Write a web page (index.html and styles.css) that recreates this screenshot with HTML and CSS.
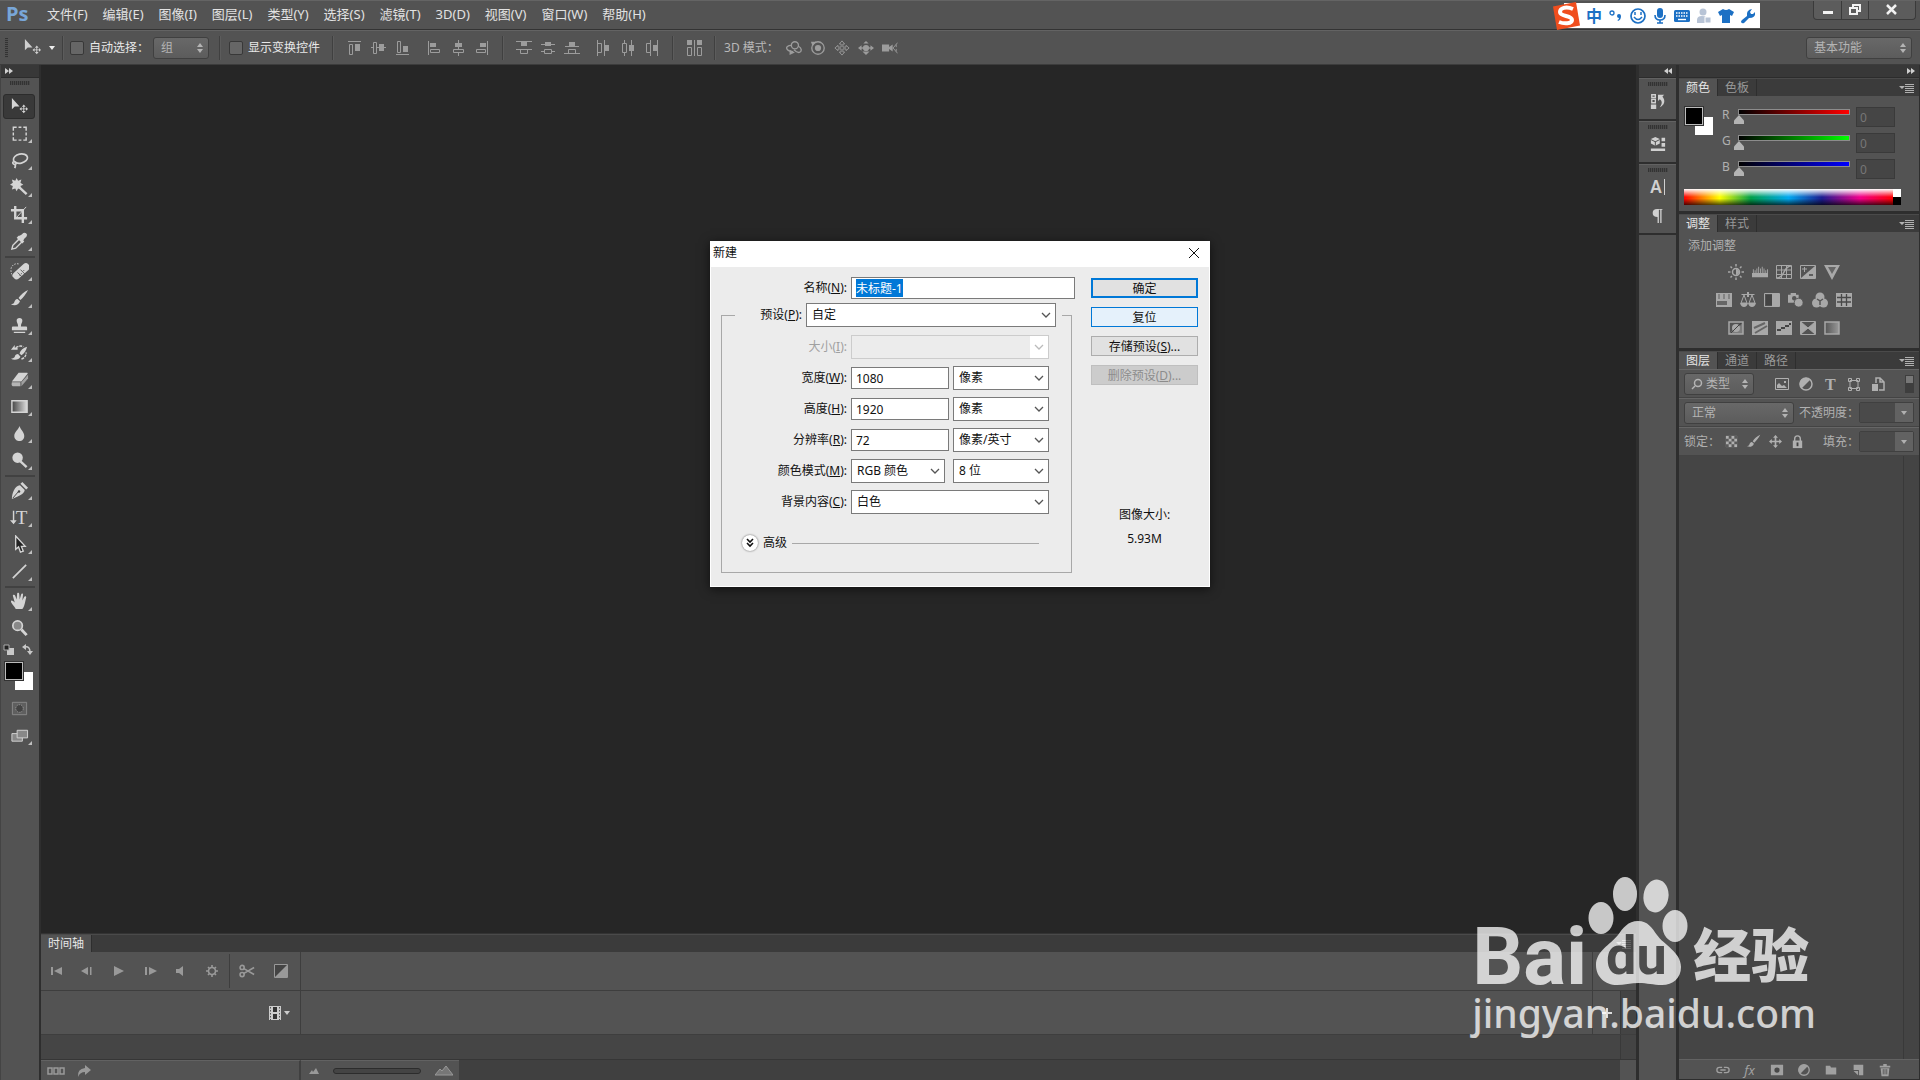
FILE: index.html
```html
<!DOCTYPE html>
<html lang="zh-CN">
<head>
    <meta charset="UTF-8">
    <meta name="viewport" content="width=device-width, initial-scale=1.0">
    <title>Ps</title>
    <link rel="stylesheet" href="styles.css">
</head>
<body>
    <!-- 共用图标 -->
    <svg class="sprite" aria-hidden="true">
        <symbol id="updown" viewBox="0 0 8 12"><path d="M4 1l3 4H1zM4 11l3-4H1z" fill="currentColor"/></symbol>
        <symbol id="chevron" viewBox="0 0 10 10"><path d="M1 3l4 4 4-4" fill="none" stroke="currentColor" stroke-width="1.3"/></symbol>
        <symbol id="down" viewBox="0 0 8 6"><path d="M1 1h6L4 5z" fill="currentColor"/></symbol>
        <symbol id="panel-menu" viewBox="0 0 16 10"><path d="M0 3h6L3 6zM6 1h9v1H6zM6 3h9v1H6zM6 5h9v1H6zM6 7h9v1H6zM6 9h9v1H6z" fill="currentColor"/></symbol>
        <symbol id="right2" viewBox="0 0 8 6"><path d="M0 0l4 3-4 3zM4 0l4 3-4 3z" fill="currentColor"/></symbol>
        <symbol id="left2" viewBox="0 0 8 6"><path d="M8 0L4 3l4 3zM4 0L0 3l4 3z" fill="currentColor"/></symbol>
        <symbol id="move" viewBox="0 0 20 20"><path d="M2 1v12l3-3h5z"/><path d="M14.500 8l2 2.200h-1.500V12h1.800v-1.500l2.200 2-2.200 2V13H15v1.800h1.500l-2 2.200-2-2.200H14V13h-1.800v1.500l-2.200-2 2.200-2V12H14v-1.800h-1.500z"/></symbol>
        <symbol id="cross" viewBox="0 0 16 16"><path d="M8 0l3 3.500H9V7h3.500V5L16 8l-3.500 3V9H9v3.500h2L8 16l-3-3.500h2V9H3.500v2L0 8l3.500-3v2H7V3.500H5z"/></symbol>
        <symbol id="brush" viewBox="0 0 20 20"><path d="M19 1c-4 2-8 5-10 8.500l2 2C14 9 17 5 19 1zM8 10.500c-2.500 0-3 2-3.500 3.500C4 15.500 2.500 16 1 16c3 2 8 1.500 9.500-3z"/></symbol>
        <symbol id="halfcircle" viewBox="0 0 16 16"><circle cx="8" cy="8" r="6" fill="none" stroke="currentColor" stroke-width="1.500"/><path d="M12.500 3.500A6.300 6.300 0 1 0 3.500 12.500z"/></symbol>
    </svg>

    <header class="menu-bar">
        <span class="brand">Ps</span>
        <nav class="menus">
            <a href="#">文件(F)</a>
            <a href="#">编辑(E)</a>
            <a href="#">图像(I)</a>
            <a href="#">图层(L)</a>
            <a href="#">类型(Y)</a>
            <a href="#">选择(S)</a>
            <a href="#">滤镜(T)</a>
            <a href="#">3D(D)</a>
            <a href="#">视图(V)</a>
            <a href="#">窗口(W)</a>
            <a href="#">帮助(H)</a>
        </nav>
        <div class="window-controls">
            <button aria-label="最小化"><svg width="12" height="12"><path d="M1 7h10v3H1z"/></svg></button>
            <button aria-label="还原"><svg width="14" height="14" fill="none" stroke="currentColor" stroke-width="2"><path d="M5 5V2h7v6H9M2 5h7v6H2z"/></svg></button>
            <button class="close" aria-label="关闭"><svg width="12" height="12" stroke="currentColor" stroke-width="2.500"><path d="M1 1l9 9M10 1L1 10"/></svg></button>
        </div>
    </header>

    <div class="options-bar">
        <span class="grip-v"></span>
        <button class="current-tool" aria-label="移动工具"><svg width="19" height="19"><use href="#move"/></svg></button>
        <svg class="tiny" width="8" height="6"><use href="#down"/></svg>
        <i class="sep first"></i>
        <label class="check"><input type="checkbox">自动选择：</label>
        <span class="pick dark group-pick"><select aria-label="组"><option>组</option></select><svg width="8" height="12"><use href="#updown"/></svg></span>
        <i class="sep"></i>
        <label class="check"><input type="checkbox">显示变换控件</label>
        <i class="sep wide"></i>
        <div class="icon-row">
            <button aria-label="顶对齐"><svg viewBox="0 0 16 16"><path d="M2 1h13v1H2zM9 4h5v7H9z"/><path class="ln" d="M3.500 4.500h3v10h-3z"/></svg></button>
            <button aria-label="垂直居中对齐"><svg viewBox="0 0 16 16"><path d="M1 7h2v1H1zM7 7h2v1H7zM14 7h2v1h-2zM9 4h5v7H9z"/><path class="ln" d="M3.500 2.500h3v11h-3z"/></svg></button>
            <button aria-label="底对齐"><svg viewBox="0 0 16 16"><path d="M2 14h13v1H2zM9 6h5v6H9z"/><path class="ln" d="M3.500 1.500h3v11h-3z"/></svg></button>
        </div>
        <div class="icon-row second">
            <button aria-label="左对齐"><svg viewBox="0 0 16 16"><path d="M2 1h1v14H2zM4 3h6v4H4z"/><path class="ln" d="M4.500 9.500h9v3h-9z"/></svg></button>
            <button aria-label="水平居中对齐"><svg viewBox="0 0 16 16"><path d="M8 0h1v3H8zM8 7h1v3H8zM8 13h1v3H8zM5 3h7v4H5z"/><path class="ln" d="M3.500 9.500h10v3h-10z"/></svg></button>
            <button aria-label="右对齐"><svg viewBox="0 0 16 16"><path d="M13 1h1v14h-1zM6 3h6v4H6z"/><path class="ln" d="M2.500 9.500h9v3h-9z"/></svg></button>
        </div>
        <i class="sep"></i>
        <div class="icon-row">
            <button aria-label="按顶分布"><svg viewBox="0 0 16 16"><path d="M0 1h16v1H0zM5 2h6v4H5zM0 9h16v1H0z"/><path class="ln" d="M4.500 9.500h7v4h-7z"/></svg></button>
            <button aria-label="垂直居中分布"><svg viewBox="0 0 16 16"><path d="M1 4h14v1H1zM5 2h6v4H5zM1 11h3v1H1zM12 11h3v1h-3z"/><path class="ln" d="M4.500 9.500h7v4h-7z"/></svg></button>
            <button aria-label="按底分布"><svg viewBox="0 0 16 16"><path d="M1 6h14v1H1zM5 2h6v4H5zM0 13h16v1H0z"/><path class="ln" d="M4.500 9.500h7v4h-7z"/></svg></button>
        </div>
        <div class="icon-row second">
            <button aria-label="按左分布"><svg viewBox="0 0 16 16"><path d="M1 0h1v16H1zM8 0h1v16H8zM9 5h4v6H9z"/><path class="ln" d="M1.500 3.500h4v9h-4z"/></svg></button>
            <button aria-label="水平居中分布"><svg viewBox="0 0 16 16"><path d="M4 0h1v3H4zM4 13h1v3H4zM11 0h1v16h-1zM9 5h5v6H9z"/><path class="ln" d="M2.500 3.500h4v9h-4z"/></svg></button>
            <button aria-label="按右分布"><svg viewBox="0 0 16 16"><path d="M6 0h1v16H6zM13 0h1v16h-1zM9 5h4v6H9z"/><path class="ln" d="M2.500 3.500h4v9h-4z"/></svg></button>
        </div>
        <i class="sep"></i>
        <div class="icon-row">
            <button aria-label="自动对齐图层"><svg viewBox="0 0 16 16"><path d="M1 0h5v5H1zM8 0h1v16H8zM11 0h5v5h-5z"/><path class="ln" d="M1.500 7.500h4v8h-4zM11.500 7.500h4v8h-4z"/></svg></button>
        </div>
        <i class="sep"></i>
        <span class="mode-label">3D 模式：</span>
        <div class="icon-row">
            <button aria-label="旋转"><svg viewBox="0 0 18 16"><circle cx="10" cy="5" r="4" class="ln2"/><path class="ln2" d="M6 5C2 5 0 7 1 9s5 3 7 3M14 6c4 2 4 6 1 7-2 .5-4-1-6-3"/><path d="M4 10l6 3-6 3z"/></svg></button>
            <button aria-label="滚动"><svg viewBox="0 0 18 16"><circle cx="9" cy="8" r="7" class="ln2"/><circle cx="9" cy="8" r="3.500"/><path d="M1 1h6L3 6z"/></svg></button>
            <button aria-label="拖动"><svg viewBox="-1 -1 18 18"><path class="ln" d="M8 0l3 3.500H9V7h3.500V5L16 8l-3.500 3V9H9v3.500h2L8 16l-3-3.500h2V9H3.500v2L0 8l3.500-3v2H7V3.500H5z"/></svg></button>
            <button aria-label="滑动"><svg viewBox="0 0 18 16"><circle cx="9" cy="8" r="3.500"/><path d="M9 16l4-4H5zM9 0l3 3H6zM0 8l4-3v6zM18 8l-4-3v6z"/><path class="ln2" d="M2 8h14"/></svg></button>
            <button aria-label="缩放"><svg viewBox="0 0 18 16"><path d="M0 4h8v8H0zM8 7l4-3v8L8 9z"/><path class="ln" d="M17.500 2l-5 6 5 6M16 4v3M16 9v3"/></svg></button>
        </div>
        <span class="pick dark workspace-pick"><select aria-label="工作区"><option>基本功能</option></select><svg width="8" height="12"><use href="#updown"/></svg></span>
    </div>

    <main class="workspace">
        <aside class="tools">
            <div class="strip"><svg width="8" height="6"><use href="#right2"/></svg></div>
            <span class="grip"></span>
            <button class="tool active" aria-label="移动"><svg><use href="#move"/></svg></button>
            <button class="tool more" aria-label="矩形选框"><svg viewBox="0 0 20 20"><path d="M3.500 7V3.500H7M9 3.500h3M14 3.500h3V7M17 9v3M17 14v3h-3M12 17H9M7 17H3.500v-3M3.500 12V9" fill="none" stroke="currentColor" stroke-width="1.500"/></svg></button>
            <button class="tool more" aria-label="套索"><svg viewBox="0 0 20 20" fill="none" stroke="currentColor" stroke-width="1.800"><ellipse cx="11" cy="8" rx="7.500" ry="4.800" transform="rotate(-12 11 8)"/><path d="M4 11c-2 1-1 3 1 3s2-2 0-2.500M5 14c1 1 1 2 0 4"/></svg></button>
            <button class="tool more" aria-label="魔棒"><svg viewBox="0 0 20 20"><path d="M7 0l1.500 3L12 1.500 11 5l3 2-3 1.500 1 3.500-3.500-1L7 14l-1.500-3L2 12l1-3.500L0 7l3-2-1-3.500L5.500 3z"/><path d="M9 9l8.500 8" stroke="currentColor" stroke-width="2.500"/></svg></button>
            <button class="tool more" aria-label="裁剪"><svg viewBox="0 0 20 20" fill="none" stroke="currentColor" stroke-width="2.500"><path d="M5.500 1v13H18M1 5.500h12.500V19"/><path d="M7 13L17 2" stroke-width="1"/></svg></button>
            <button class="tool more" aria-label="吸管"><svg viewBox="0 0 20 20"><path d="M10 4l2-1 2-2q3-1 4 2 0 2-3 4l-1 2 1 1-2 2-6-6 2-2z"/><path d="M9.500 7.500L3 14l-1 4 4-1 6.500-6.500" fill="none" stroke="currentColor" stroke-width="1.500"/></svg></button>
            <hr>
            <button class="tool more" aria-label="污点修复画笔"><svg viewBox="0 0 20 20"><rect x="-1" y="7" width="21" height="8" rx="3.500" transform="rotate(-42 10 10) translate(2 0)"/><path d="M8 11l5 5M11 8l5 5M11.500 12l1 .5M10 14l1 0M14 9h1" stroke="#555" /><path d="M9 2C5 1 1 4 1 8s1 6 3 8" fill="none" stroke="currentColor" stroke-dasharray="1.500 1.500"/></svg></button>
            <button class="tool more" aria-label="画笔"><svg><use href="#brush"/></svg></button>
            <button class="tool more" aria-label="仿制图章"><svg viewBox="0 0 20 20"><path d="M7 5a3 3 0 1 1 6 0c0 2-1.500 3-1.500 6H17q1 0 1 1v3H2v-3q0-1 1-1h5.500C8.500 8 7 7 7 5zM4 16.500h12V18H4z"/></svg></button>
            <button class="tool more" aria-label="历史记录画笔"><svg viewBox="0 0 20 20"><path d="M18 4c-4 1-7 4-8 7l2 2c3-2 5-5 6-9zM8.500 11.500c-2 0-3 1-3.500 3-.5 1-2 2-4 2 3 2 9 1 10-2zM1 7l4-5v3h3v2z"/><path d="M6 5q5-3 8-1M12 17q5-2 5-7" fill="none" stroke="currentColor" stroke-width="1.500" stroke-dasharray="3 1"/></svg></button>
            <button class="tool more" aria-label="橡皮擦"><svg viewBox="0 0 20 20"><path d="M9 3h9q1 0 .5 1L12 12H2z"/><path d="M2 13h9v4H3q-2 0-1-4z" opacity=".75"/><path d="M12 13l7-8v4l-7 8z" opacity=".6"/></svg></button>
            <button class="tool more" aria-label="渐变"><svg viewBox="0 0 20 20"><defs><linearGradient id="g1"><stop stop-color="#444"/><stop offset="1" stop-color="#ddd"/></linearGradient></defs><path d="M2 4h16v12H2z" fill="url(#g1)" stroke="currentColor" stroke-width="1.500"/></svg></button>
            <button class="tool more" aria-label="模糊"><svg viewBox="0 0 20 20"><path d="M10 2c1 4 5 6 5 10.500C15 16 12.500 18 10 18s-5.500-2-5.500-5.500C4.500 8 9 6 10 2z"/></svg></button>
            <button class="tool more" aria-label="减淡"><svg viewBox="0 0 20 20"><circle cx="8" cy="7" r="5.500"/><path d="M11 11l6.500 6" stroke="currentColor" stroke-width="2.500"/></svg></button>
            <hr>
            <button class="tool more" aria-label="钢笔"><svg viewBox="0 0 20 20"><path d="M13 1l6 6-2 2-6-6zM10.500 4.500l5 5C15 14 9 16 2 19c0-6 3-14 8.500-14.500z"/><path d="M3 18l6-7" stroke="#444"/><circle cx="9.500" cy="11" r="1.300" fill="#444"/></svg></button>
            <button class="tool more" aria-label="直排文字"><svg viewBox="0 0 20 20"><text x="6" y="17" font-family="Liberation Serif, serif" font-size="20">T</text><path d="M3 3h1.500v10H7l-3.200 4L0 13h3z"/></svg></button>
            <button class="tool more" aria-label="直接选择"><svg viewBox="0 0 20 20"><path d="M6 1v14l3-2.500L11 18l3-1-2-5h4z" fill="#222" stroke="currentColor" stroke-width="1.400"/></svg></button>
            <button class="tool more" aria-label="直线"><svg viewBox="0 0 20 20"><path d="M3 17L17 3" stroke="currentColor" stroke-width="1.800"/></svg></button>
            <hr>
            <button class="tool more" aria-label="抓手"><svg viewBox="0 0 20 20"><path d="M6 18c-1-3-5-6-5-8s2-1 4 1L3 4c0-1.500 2-1.500 2.500 0L7 8 7.500 2c0-1.500 2-1.500 2.200 0l.5 6 1.500-5.500c.5-1.500 2.300-1 2 .5L13 9l2-4c1-1.200 2.500-.5 2 1-1 3-1 8-4 12z"/></svg></button>
            <button class="tool" aria-label="缩放"><svg viewBox="0 0 20 20"><circle cx="8" cy="7" r="5" fill="#888" stroke="currentColor" stroke-width="1.800"/><path d="M12 11l5.500 6" stroke="currentColor" stroke-width="3"/></svg></button>
            <div class="swap">
                <button aria-label="默认颜色"><svg width="11" height="11"><path d="M4 4h7v7H4z"/><path d="M1 1h5v5H1z" fill="#222" stroke="#aaa"/></svg></button>
                <button aria-label="切换颜色"><svg width="11" height="11" viewBox="0 0 11 11"><path d="M3 3q5-1 5 5" fill="none" stroke="currentColor" stroke-width="1.500"/><path d="M0 3l4-3v6zM5 7h6l-3 4z"/></svg></button>
            </div>
            <div class="swatches"><button class="fore" aria-label="前景色"></button><button class="back" aria-label="背景色"></button></div>
            <button class="tool mask" aria-label="快速蒙版"><svg viewBox="0 0 20 20"><path d="M2.500 3.500h15v13h-15z" fill="#5f5f5f" stroke="#8a8a8a"/><circle cx="10" cy="10" r="4" fill="#444" stroke="#999" stroke-dasharray="1.500 1"/></svg></button>
            <button class="tool more" aria-label="屏幕模式"><svg viewBox="0 0 20 20" stroke="currentColor" fill="#888"><path d="M2 8h11v8H2z"/><path d="M7.500 4.500h11v8h-11z"/></svg></button>
        </aside>

        <section class="stage">
            <div class="canvas"></div>
            <section class="timeline">
                <div class="tabs"><button class="tab on">时间轴</button><button class="tab-menu" aria-label="面板菜单"><svg width="16" height="10"><use href="#panel-menu"/></svg></button></div>
                <div class="track-head">
                    <div class="playback">
                        <button aria-label="首帧"><svg viewBox="0 0 16 16"><path d="M2 4h2v8H2zM13 4v8L5 8z"/></svg></button>
                        <button aria-label="上一帧"><svg viewBox="0 0 16 16"><path d="M8 4v8L1 8zM10 4h1.500v8H10z"/></svg></button>
                        <button aria-label="播放"><svg viewBox="0 0 16 16"><path d="M3 3l10 5-10 5z"/></svg></button>
                        <button aria-label="下一帧"><svg viewBox="0 0 16 16"><path d="M3 4h2v8H3zM7 4l8 4-8 4z"/></svg></button>
                        <button aria-label="静音"><svg viewBox="0 0 16 16"><path d="M3 6h3l4-3v10l-4-3H3z"/></svg></button>
                        <button aria-label="选项"><svg viewBox="0 0 16 16"><circle cx="8" cy="8" r="3.500" fill="none" stroke="currentColor" stroke-width="1.600"/><path d="M8 2v3M8 11v3M2 8h3M11 8h3M4 4l2 2M10 10l2 2M12 4l-2 2M4 12l2-2" stroke="currentColor" stroke-width="1.600"/></svg></button>
                        <i></i>
                        <button aria-label="拆分"><svg viewBox="0 0 18 16" fill="none" stroke="currentColor" stroke-width="1.800"><circle cx="3.500" cy="4" r="2.300"/><circle cx="3.500" cy="12" r="2.300"/><path d="M5 5l12 7M5 11l12-7"/></svg></button>
                        <button aria-label="过渡"><svg viewBox="0 0 16 16"><path d="M1.500 1.500h13v13h-13z" fill="#444" stroke="currentColor"/><path d="M14 2v12H2z"/></svg></button>
                    </div>
                    <div class="ruler"></div>
                </div>
                <div class="track-body">
                    <div class="track-name"><button aria-label="添加媒体"><svg width="12" height="14"><path d="M0 0h12v14H0z"/><path d="M4 1h4v5H4zM4 8h4v5H4z" fill="#333"/><path d="M1.500 1v13M10.500 1v13" stroke="#555" stroke-dasharray="1.500 1.500"/></svg><svg width="8" height="6"><use href="#down"/></svg></button></div>
                    <div class="track-lane"></div>
                    <div class="track-add"><button aria-label="添加"><svg width="10" height="10"><path d="M4 0h2v4h4v2H6v4H4V6H0V4h4z"/></svg></button></div>
                    <div class="vbar"></div>
                </div>
                <div class="track-empty"><div class="vbar"></div></div>
                <div class="timeline-foot">
                    <div class="foot-left">
                        <button aria-label="转换为帧动画"><svg width="18" height="8" fill="none" stroke="currentColor" stroke-width="1.500"><path d="M1 1h4v6H1zM7 1h4v6H7zM13 1h4v6h-4z"/></svg></button>
                        <button aria-label="渲染视频"><svg width="14" height="12"><path d="M8 0l6 5-6 5V7Q3 7 1 12 0 4 8 3z"/></svg></button>
                    </div>
                    <div class="foot-zoom">
                        <svg width="10" height="6"><path d="M0 6l3-4 1 2 3-4 3 6z"/></svg>
                        <input type="range" aria-label="时间轴缩放">
                        <svg width="18" height="10"><path d="M0 9l5-6 2 2 4-5 7 9z" fill="#777" stroke="currentColor"/></svg>
                    </div>
                    <div class="hbar"></div>
                    <div class="corner"></div>
                </div>
            </section>
        </section>

        <aside class="dock">
            <div class="strip end"><svg width="8" height="6"><use href="#left2"/></svg></div>
            <div class="dock-group">
                <span class="grip"></span>
                <button aria-label="历史记录"><svg viewBox="0 0 18 18"><path d="M2 2h4v3H2zM2 7h4v4H2z" fill="none" stroke="currentColor" stroke-width="1.500"/><path d="M1 13h6v5H1zM9 2h7l-2 2c4 5 2 10-3 12 3-4 3-7 0-9l-2 2z"/></svg></button>
            </div>
            <div class="dock-group">
                <span class="grip"></span>
                <button aria-label="属性"><svg viewBox="0 0 18 18"><path d="M6 1l5 2.500v5L6 11 1 8.500v-5z"/><path d="M1 4l5 2.500L11 4M6 6v5" fill="none" stroke="#444"/><path d="M13 2h4v4h-4zM13 8h4v4h-4zM1 14h16v3H1z"/></svg></button>
            </div>
            <div class="dock-group last">
                <span class="grip"></span>
                <button aria-label="字符" class="char">A<i></i></button>
                <button aria-label="段落"><svg viewBox="0 0 18 18"><path d="M8 1h6v1h-1v15h-1.500V2H10v15H8.500v-7Q3 10 3 5.500 3 1 8 1z"/></svg></button>
            </div>
            <div class="dock-rest"></div>
        </aside>

        <aside class="panels">
            <div class="strip end"><svg width="8" height="6"><use href="#right2"/></svg></div>
            <section class="panel">
                <div class="tabs"><button class="tab on">颜色</button><button class="tab">色板</button><button class="tab-menu" aria-label="面板菜单"><svg width="16" height="10"><use href="#panel-menu"/></svg></button></div>
                <div class="color-body">
                    <div class="swatches"><button class="fore" aria-label="前景色"></button><button class="back" aria-label="背景色"></button></div>
                    <div class="channels">
                        <div class="channel red"><label for="ch-r">R</label><input type="range" id="ch-r" max="255" value="0"><input type="text" value="0" aria-label="R 值"></div>
                        <div class="channel green"><label for="ch-g">G</label><input type="range" id="ch-g" max="255" value="0"><input type="text" value="0" aria-label="G 值"></div>
                        <div class="channel blue"><label for="ch-b">B</label><input type="range" id="ch-b" max="255" value="0"><input type="text" value="0" aria-label="B 值"></div>
                    </div>
                </div>
                <div class="spectrum"><span class="hues"></span><span class="ends"></span></div>
            </section>

            <section class="panel">
                <div class="tabs"><button class="tab on">调整</button><button class="tab">样式</button><button class="tab-menu" aria-label="面板菜单"><svg width="16" height="10"><use href="#panel-menu"/></svg></button></div>
                <div class="adjust-body">
                    <p>添加调整</p>
                    <div class="icon-row">
                        <button aria-label="亮度"><svg viewBox="0 0 16 16"><circle cx="8" cy="8" r="3.500" class="ln2"/><path d="M8 5a3 3 0 0 1 0 6z"/><path class="ln2" d="M8 0v2.500M8 13.500V16M0 8h2.500M13.500 8H16M2.500 2.500L4 4M12 12l1.500 1.500M13.500 2.500L12 4M4 12l-1.500 1.500"/></svg></button>
                        <button aria-label="色阶"><svg viewBox="0 0 18 16"><path d="M0 9h1V5h1v4h1V6h1v3h1V4h1v5h1V2h1v7h1V4h1v5h1V2h1v7h1V4h1v5h1V6h1v3h1V5h1v9H0z"/></svg></button>
                        <button aria-label="曲线"><svg viewBox="0 0 16 16"><path class="ln" d="M.5 1.500h15v13H.5zM5.500 2v12M10.500 2v12M1 6h14M1 10.500h14"/><path class="ln2" d="M1 14C9 14 7 2 15 2"/></svg></button>
                        <button aria-label="曝光度"><svg viewBox="0 0 16 16"><path class="ln" d="M.5 1.500h15v13H.5z"/><path d="M15 2v12H1z"/><path d="M2 5h5M4.500 3v5" stroke="currentColor"/><path d="M9 11h4" stroke="#444" stroke-width="1.500"/></svg></button>
                        <button aria-label="自然饱和度"><svg viewBox="0 0 16 16"><path d="M0 1h16L8 16z"/><path d="M4 3h8L8 10z" fill="#666"/></svg></button>
                    </div>
                    <div class="icon-row">
                        <button aria-label="色相/饱和度"><svg viewBox="0 0 16 16"><path d="M0 1h16v14H0z"/><path d="M3 2v5M8 2v5M13 2v5" stroke="#777" stroke-width="1.500"/><path d="M1 9h10v4H1z" fill="#666"/></svg></button>
                        <button aria-label="色彩平衡"><svg viewBox="0 0 16 16"><path class="ln" d="M1.500 2.500h13M4 3l-3 8h6zM12 3l-3 8h6z"/><path d="M7 0h2v5H7zM0 11h8q-1 4-4 4t-4-4zM8 11h8q-1 4-4 4t-4-4z"/></svg></button>
                        <button aria-label="黑白"><svg viewBox="0 0 16 16"><path class="ln" d="M.5 1.500h15v13H.5z"/><path d="M2 3h6v10H2z" fill="#444"/><path d="M8 2h7v12H8z"/></svg></button>
                        <button aria-label="照片滤镜"><svg viewBox="0 0 18 16"><path d="M0 2h3V0h6v2h3v9H0z"/><circle cx="7" cy="6" r="2.500" fill="#555"/><circle cx="12" cy="11" r="5" stroke="#555"/></svg></button>
                        <button aria-label="通道混合器"><svg viewBox="0 0 16 16"><circle cx="8" cy="5" r="4.500"/><circle cx="4.500" cy="11" r="4.500"/><circle cx="11.500" cy="11" r="4.500"/><path d="M8 13V9L5 7M8 9l3-2" fill="none" stroke="#555" stroke-width="1.500"/></svg></button>
                        <button aria-label="颜色查找"><svg viewBox="0 0 16 16"><path d="M0 1h16v14H0z"/><path d="M1 5.500h14M1 10h14M5.500 2v12M10.500 2v12" stroke="#484848" stroke-width="1.300"/></svg></button>
                    </div>
                    <div class="icon-row">
                        <button aria-label="反相"><svg viewBox="0 0 16 16"><path class="ln2" d="M1 2h14v12H1z"/><path d="M15 2v12H1l4-4c2 2 7 1 7-4z" opacity=".5"/><circle cx="8" cy="8" r="4"/><path d="M3 13L13 3" stroke="#444"/></svg></button>
                        <button aria-label="色调分离"><svg viewBox="0 0 16 16"><path d="M0 1h16v14H0z"/><path d="M2 8l11-5M3 13l12-7" stroke="#666" stroke-width="2"/></svg></button>
                        <button aria-label="阈值"><svg viewBox="0 0 16 16"><path d="M0 1h16v14H0z"/><path d="M1 11V9h4V7h4V5h4V3h2v2h-2v2H9v2H5v2z" fill="#444"/></svg></button>
                        <button aria-label="可选颜色"><svg viewBox="0 0 16 16"><path class="ln" d="M.5 1.500h15v13H.5zM1 2l14 12M15 2L1 14"/><path d="M1 2l7 6-7 6zM15 2L8 8l7 6z"/></svg></button>
                        <button aria-label="渐变映射"><svg viewBox="0 0 16 16"><path d="M1 2h14v12H1z" fill="url(#g2)" stroke="currentColor" stroke-width="1.500"/><defs><linearGradient id="g2"><stop stop-color="#555"/><stop offset="1" stop-color="#999"/></linearGradient></defs></svg></button>
                    </div>
                </div>
            </section>

            <section class="panel layers">
                <div class="tabs"><button class="tab on">图层</button><button class="tab">通道</button><button class="tab">路径</button><button class="tab-menu" aria-label="面板菜单"><svg width="16" height="10"><use href="#panel-menu"/></svg></button></div>
                <div class="layer-row">
                    <span class="pick dark filter-pick"><svg class="search" width="12" height="12"><circle cx="7" cy="5" r="3.500" class="ln2"/><path class="ln2" d="M4 8l-3 3"/></svg><select aria-label="筛选"><option>类型</option></select><svg width="8" height="12"><use href="#updown"/></svg></span>
                    <div class="icon-row">
                        <button aria-label="像素"><svg viewBox="0 0 16 16"><path class="ln" d="M1.500 2.500h13v11h-13z"/><path d="M3 12V9l2-2 3 3 2-1 3 3zM10 5h2v2h-2z"/></svg></button>
                        <button aria-label="调整"><svg><use href="#halfcircle"/></svg></button>
                        <button aria-label="文字"><svg viewBox="0 0 16 16"><text x="3" y="14" font-family="Liberation Serif, serif" font-weight="bold" font-size="16">T</text></svg></button>
                        <button aria-label="形状"><svg viewBox="0 0 16 16"><path class="ln" d="M4 4.500h8v8H4zM2.500 2.500h3v3h-3zM10.500 2.500h3v3h-3zM2.500 11.500h3v3h-3zM10.500 11.500h3v3h-3z"/></svg></button>
                        <button aria-label="智能对象"><svg viewBox="0 0 16 16"><path class="ln2" d="M6 7V2h4l4 4v8H9M10 2v4h4"/><path d="M2 8h6v7H2z"/></svg></button>
                    </div>
                    <button class="toggle" aria-label="筛选开关"></button>
                </div>
                <div class="layer-row">
                    <span class="pick dark blend-pick"><select aria-label="混合模式"><option>正常</option></select><svg width="8" height="12"><use href="#updown"/></svg></span>
                    <label for="opacity">不透明度：</label>
                    <span class="spin"><input type="text" id="opacity"><button aria-label="展开"><svg width="8" height="6"><use href="#down"/></svg></button></span>
                </div>
                <div class="layer-row">
                    <span class="lock-label">锁定：</span>
                    <div class="icon-row locks">
                        <button aria-label="锁定透明像素"><svg viewBox="0 0 16 16"><path d="M2 2h12v12H2z"/><path d="M5 2h3v3H5zM11 2h3v3h-3zM2 5h3v3H2zM8 5h3v3H8zM5 8h3v3H5zM11 8h3v3h-3zM2 11h3v3H2zM8 11h3v3H8z" fill="#5a5a5a"/></svg></button>
                        <button aria-label="锁定图像像素"><svg><use href="#brush"/></svg></button>
                        <button aria-label="锁定位置"><svg viewBox="0 0 16 16"><use href="#cross" x="1" y="1" width="14" height="14"/></svg></button>
                        <button aria-label="锁定全部"><svg viewBox="0 0 16 16"><path d="M3 7h10v8H3z"/><path class="ln2" d="M5 8V5q0-3 3-3t3 3v3"/><path d="M7 9h2v4H7z" fill="#444"/></svg></button>
                    </div>
                    <label for="fill">填充：</label>
                    <span class="spin"><input type="text" id="fill"><button aria-label="展开"><svg width="8" height="6"><use href="#down"/></svg></button></span>
                </div>
                <div class="layer-list"><div class="vbar"></div></div>
                <div class="layer-foot">
                    <button aria-label="链接图层"><svg viewBox="0 0 16 16" class="ln2"><path d="M7 11H4a3 3 0 0 1 0-6h3M9 5h3a3 3 0 0 1 0 6H9M5 8h6"/></svg></button>
                    <button aria-label="图层样式" class="fx">fx</button>
                    <button aria-label="蒙版"><svg viewBox="0 0 16 16"><path d="M1 2h14v12H1z"/><circle cx="8" cy="8" r="3" fill="#484848"/></svg></button>
                    <button aria-label="调整图层"><svg><use href="#halfcircle"/></svg></button>
                    <button aria-label="新建组"><svg viewBox="0 0 16 16"><path d="M2 3h5l1 2h6v8H2z"/></svg></button>
                    <button aria-label="新建图层"><svg viewBox="0 0 16 16"><path d="M3 2h11v12h-5V8H3z"/><path d="M3 9h5v5z"/></svg></button>
                    <button aria-label="删除图层"><svg viewBox="0 0 16 16"><path d="M6 1h4v2h4v2H2V3h4zM3 6h10l-1 9H4z"/><path d="M6 7v6M8 7v6M10 7v6" stroke="#555"/></svg></button>
                </div>
            </section>
        </aside>
    </main>

    <!-- 新建文档对话框 -->
    <form class="dialog" role="dialog" aria-labelledby="dialog-title">
        <div class="dialog-title">
            <span id="dialog-title">新建</span>
            <button type="button" aria-label="关闭"><svg width="12" height="12" stroke="currentColor"><path d="M1 1l10 10M11 1L1 11"/></svg></button>
        </div>
        <div class="dialog-body">
            <div class="dialog-main">
                <div class="name-row">
                    <label for="name">名称(<u>N</u>):</label>
                    <input type="text" id="name" value="未标题-1" autofocus>
                </div>
                <fieldset>
                    <legend>
                        <label for="preset">预设(<u>P</u>):</label>
                        <span class="pick light"><select id="preset"><option>自定</option></select><svg width="10" height="10"><use href="#chevron"/></svg></span>
                    </legend>
                    <div class="fields">
                        <label for="size" class="off">大小(<u>I</u>):</label>
                        <span class="pick light off span2"><select id="size" disabled><option></option></select><svg width="10" height="10"><use href="#chevron"/></svg></span>
                        <label for="width">宽度(<u>W</u>):</label>
                        <input type="text" id="width" value="1080">
                        <span class="pick light"><select aria-label="宽度单位"><option>像素</option></select><svg width="10" height="10"><use href="#chevron"/></svg></span>
                        <label for="height">高度(<u>H</u>):</label>
                        <input type="text" id="height" value="1920">
                        <span class="pick light"><select aria-label="高度单位"><option>像素</option></select><svg width="10" height="10"><use href="#chevron"/></svg></span>
                        <label for="res">分辨率(<u>R</u>):</label>
                        <input type="text" id="res" value="72">
                        <span class="pick light"><select aria-label="分辨率单位"><option>像素/英寸</option></select><svg width="10" height="10"><use href="#chevron"/></svg></span>
                        <label for="mode">颜色模式(<u>M</u>):</label>
                        <span class="pick light mode"><select id="mode"><option>RGB 颜色</option></select><svg width="10" height="10"><use href="#chevron"/></svg></span>
                        <span class="pick light"><select aria-label="位深"><option>8 位</option></select><svg width="10" height="10"><use href="#chevron"/></svg></span>
                        <label for="bg">背景内容(<u>C</u>):</label>
                        <span class="pick light span2"><select id="bg"><option>白色</option></select><svg width="10" height="10"><use href="#chevron"/></svg></span>
                    </div>
                    <div class="advanced">
                        <button type="button" aria-label="展开高级"><svg width="10" height="10" fill="none" stroke="currentColor" stroke-width="1.600"><path d="M2 1l3 3 3-3M2 5l3 3 3-3"/></svg></button>
                        <span>高级</span>
                        <i></i>
                    </div>
                </fieldset>
            </div>
            <div class="dialog-side">
                <button type="button" class="primary">确定</button>
                <button type="button" class="hover">复位</button>
                <button type="button">存储预设(<u>S</u>)...</button>
                <button type="button" disabled>删除预设(<u>D</u>)...</button>
                <p class="size-label">图像大小:</p>
                <p>5.93M</p>
            </div>
        </div>
    </form>

    <!-- 输入法状态栏 -->
    <div class="ime">
        <svg class="ime-logo" width="28" height="28" viewBox="0 0 28 28"><path d="M1 4.500L24 0l4 23.500L5 28z" fill="#f04e1e"/><path d="M21 7C14 4 8 6 8 10c0 5 12 3 12 8 0 4-8 4-13 2" fill="none" stroke="#fff" stroke-width="4"/></svg>
        <button>中</button>
        <button aria-label="标点"><svg viewBox="0 0 16 16"><circle cx="4" cy="5" r="2" fill="none" stroke="currentColor" stroke-width="1.300"/><path d="M9 8a2 2 0 1 1 4 0q0 4-3 5l-.5-1q1.500-.5 1.500-2Q9 10 9 8z"/></svg></button>
        <button aria-label="表情"><svg viewBox="0 0 16 16"><circle cx="8" cy="8" r="7" fill="none" stroke="currentColor" stroke-width="1.700"/><path d="M5 4v3M11 4v3M4 9q4 5 8 0" fill="none" stroke="currentColor" stroke-width="1.500"/></svg></button>
        <button aria-label="语音"><svg viewBox="0 0 16 16"><rect x="5" y="0" width="6" height="10" rx="3"/><path d="M3 7q0 5 5 5t5-5M8 12v3M5 15h6" fill="none" stroke="currentColor" stroke-width="1.600"/></svg></button>
        <button aria-label="键盘"><svg viewBox="0 0 16 16"><rect y="2" width="16" height="12" rx="1.500"/><path d="M2 5h12M2 8h12" stroke="#fff" stroke-width="1.400" stroke-dasharray="1.500 1"/><path d="M4 11.500h8" stroke="#fff" stroke-width="1.400"/></svg></button>
        <button class="pale" aria-label="账号"><svg viewBox="0 0 16 16"><circle cx="7" cy="4" r="3.500"/><path d="M1 15v-3q0-4 5-4t6 3v4z"/><path d="M9 9h6v6H9z" stroke="#fff"/></svg></button>
        <button aria-label="皮肤"><svg viewBox="0 0 16 16"><path d="M5 1q3 2 6 0l5 3-2 4-2-1v8H4V7L2 8 0 4z"/></svg></button>
        <button aria-label="工具"><svg viewBox="0 0 16 16"><path d="M15 4q1 6-6 6l-5 5q-2 1-3-1 0-1 1-2l5-4q-1-6 5-7l-2 3 1 2h2z"/></svg></button>
    </div>

    <div class="watermark">
        <div class="mark-top">
            <span class="mark-bai">Bai</span>
            <svg width="102" height="110" viewBox="0 0 100 110">
                <ellipse cx="13" cy="41" rx="12.500" ry="16"/>
                <ellipse cx="37" cy="17" rx="12" ry="17"/>
                <ellipse cx="68" cy="19" rx="12.500" ry="16.500" transform="rotate(8 68 19)"/>
                <ellipse cx="87" cy="49" rx="12.500" ry="16"/>
                <path d="M50 44c10 0 14 7 19 14 7 10 24 17 24 32 0 11-8 18-19 18-9 0-15-2-23-2s-15 2-22 2C17 108 8 100 8 88c0-14 14-20 22-30 5-7 10-14 20-14z"/>
                <text class="mark-du" x="18" y="97">du</text>
            </svg>
            <span class="mark-cn">经验</span>
        </div>
        <div class="mark-url">jingyan.baidu.com</div>
    </div>

    <script>
        // 打开对话框时选中文档名称
        const nameInput = document.getElementById('name');
        nameInput.focus();
        nameInput.select();
    </script>
</body>
</html>
```
FILE: styles.css
```css
* {
    margin: 0;
    padding: 0;
    box-sizing: border-box;
}

body {
    font-family: "Noto Sans", "Noto Sans CJK SC", sans-serif;
    font-size: 12px;
    line-height: 16px;
    color: #e2e2e2;
    background: #535353;
    height: 100vh;
    display: flex;
    flex-direction: column;
    overflow: hidden;
}

button,
input,
select {
    font: inherit;
    color: inherit;
    background: none;
    border: none;
    border-radius: 0;
    outline: none;
    min-width: 0;
}

button {
    display: flex;
    align-items: center;
    justify-content: center;
}

a {
    color: inherit;
    text-decoration: none;
}

svg {
    display: block;
    flex: none;
}

svg:not([fill]) {
    fill: currentColor;
}

.sprite {
    width: 0;
    height: 0;
    position: absolute;
}

svg .ln {
    fill: none;
    stroke: currentColor;
}

svg .ln2,
svg.ln2 {
    fill: none;
    stroke: currentColor;
    stroke-width: 1.5;
}

/* 菜单栏 */
.menu-bar {
    height: 30px;
    flex: none;
    display: flex;
    align-items: flex-start;
    border-top: 1px solid #646464;
    border-bottom: 1px solid #333;
    padding: 0 4px 0 6px;
}

.brand {
    width: 41px;
    font-family: "Open Sans", sans-serif;
    font-size: 20px;
    font-weight: 700;
    line-height: 26px;
    color: #78a6d8;
}

.menus {
    display: flex;
    gap: 15px;
    font-size: 13px;
    line-height: 26px;
}

.window-controls {
    margin-left: auto;
    display: flex;
    height: 19px;
    border: 1px solid #3a3a3a;
    border-top: none;
    border-radius: 0 0 4px 4px;
    background: #5c5c5c;
    color: #f2f2f2;
}

.window-controls button {
    width: 27px;
}

.window-controls button + button {
    border-left: 1px solid #3a3a3a;
}

.window-controls .close {
    width: 47px;
}

/* 选项栏 */
.options-bar {
    height: 35px;
    flex: none;
    display: flex;
    align-items: center;
    border-top: 1px solid #636363;
    border-bottom: 1px solid #3c3c3c;
    padding: 0 8px 0 5px;
    color: #9c9c9c;
}

.grip-v {
    width: 3px;
    height: 20px;
    background: repeating-linear-gradient(#333 0 1px, #505050 1px 2px);
}

.current-tool {
    margin-left: 14px;
    width: 20px;
    color: #cfcfcf;
}

.tiny {
    margin-left: 6px;
    color: #eee;
}

.sep {
    width: 2px;
    height: 24px;
    margin: 0 8px;
    background: #404040;
    border-right: 1px solid #5c5c5c;
}

.sep.first {
    margin: 0 6px;
}

.sep.wide {
    margin-left: 12px;
}

.check {
    display: flex;
    align-items: center;
    gap: 5px;
    color: #e8e8e8;
}

.check input {
    appearance: none;
    width: 14px;
    height: 14px;
    border: 1px solid #383838;
    border-radius: 2px;
    background: #666;
}

.pick {
    display: grid;
    align-items: center;
}

.pick > * {
    grid-area: 1 / 1;
}

.pick > svg {
    justify-self: end;
    margin-right: 4px;
    pointer-events: none;
}

.pick select {
    appearance: none;
    width: 100%;
    height: 100%;
    padding-left: 7px;
}

.pick.dark {
    height: 22px;
    border: 1px solid #404040;
    border-radius: 3px;
    background: linear-gradient(#686868, #5c5c5c);
    color: #b4b4b4;
}

.group-pick {
    width: 56px;
    margin: 0 2px 0 4px;
}

.workspace-pick {
    width: 106px;
    margin-left: auto;
}

.icon-row {
    display: flex;
}

.icon-row button {
    width: 24px;
    height: 20px;
}

.icon-row svg {
    width: 16px;
    height: 16px;
}

.second {
    margin-left: 8px;
}

.mode-label {
    margin-right: 3px;
    color: #b8b8b8;
}

/* 工作区 */
.workspace {
    flex: 1;
    min-height: 0;
    display: flex;
    background: #2e2e2e;
}

.strip {
    height: 13px;
    flex: none;
    display: flex;
    align-items: center;
    padding: 0 4px;
    background: #383838;
    border-bottom: 1px solid #2c2c2c;
    color: #d0d0d0;
}

.strip.end {
    justify-content: flex-end;
}

.grip {
    display: block;
    width: 20px;
    height: 4px;
    margin: 3px auto 0;
    background: repeating-linear-gradient(90deg, #333 0 1px, #484848 1px 2px);
}

.tools {
    width: 39px;
    flex: none;
    background: #535353;
    margin-right: 2px;
    border-left: 1px solid #444;
}

.tool {
    position: relative;
    width: 32px;
    height: 27px;
    margin-left: 2px;
    color: #d4d4d4;
}

.tool svg {
    width: 19px;
    height: 19px;
}

.tool.active {
    height: 25px;
    margin-top: 9px;
    margin-bottom: 1px;
    background: #393939;
    border: 1px solid #2c2c2c;
    border-radius: 3px;
}

.tool.more::after {
    content: "";
    position: absolute;
    right: 3px;
    bottom: 4px;
    border: 2px solid transparent;
    border-right-color: #c0c0c0;
    border-bottom-color: #c0c0c0;
}

.tools hr {
    border: none;
    height: 2px;
    margin: 1px 4px 0;
    background: #414141;
}

.swap {
    display: flex;
    justify-content: space-between;
    padding: 2px 6px 7px 2px;
    color: #c8c8c8;
}

.swatches {
    display: grid;
    grid-template-columns: 10px 8px 10px;
    grid-template-rows: 10px 8px 10px;
    width: 28px;
    height: 28px;
}

.swatches .fore {
    grid-area: 1 / 1 / 3 / 3;
    z-index: 1;
    background: #000;
    border: 1px solid #bbb;
    outline: 1px solid #333;
}

.swatches .back {
    grid-area: 2 / 2 / 4 / 4;
    background: #fff;
}

.tools .swatches {
    margin: 0 0 5px 4px;
}

/* 画布与时间轴 */
.stage {
    flex: 1;
    min-width: 0;
    display: flex;
    flex-direction: column;
}

.canvas {
    flex: 1;
    background: #262626;
}

.timeline {
    flex: none;
    color: #999;
    border-top: 1px solid #333;
}

.tabs {
    display: flex;
    height: 18px;
    background: #3b3b3b;
    border-top: 1px solid #4a4a4a;
    color: #999;
}

.tab {
    padding: 0 7px;
    border-right: 1px solid #2e2e2e;
}

.tab.on {
    background: #535353;
    color: #e6e6e6;
}

.tab-menu {
    margin-left: auto;
    padding-right: 4px;
    color: #b0b0b0;
}

.track-head,
.track-body {
    display: flex;
    background: #535353;
    border-bottom: 1px solid #3e3e3e;
}

.track-head {
    height: 39px;
}

.track-body {
    height: 44px;
}

.playback,
.track-name {
    width: 260px;
    display: flex;
    align-items: center;
    border-right: 1px solid #3e3e3e;
}

.playback svg {
    width: 16px;
    height: 16px;
}

.playback button {
    width: 31px;
}

.playback i {
    width: 1px;
    height: 34px;
    margin-left: 2px;
    background: #3e3e3e;
}

.playback i ~ button {
    width: 34px;
}

.track-name {
    justify-content: flex-end;
    padding-right: 9px;
}

.track-name button {
    gap: 2px;
    color: #ccc;
}

.track-lane {
    flex: 1;
}

.track-add {
    width: 28px;
    display: flex;
    align-items: center;
    justify-content: center;
    border-left: 1px solid #3e3e3e;
}

.track-add button {
    color: #ddd;
}

.ruler {
    flex: 1;
    margin-right: 43px;
    border-right: 1px solid #3e3e3e;
}

.vbar {
    width: 16px;
    background: #444;
    border-left: 1px solid #393939;
}

.track-empty {
    height: 24px;
    display: flex;
    justify-content: flex-end;
    background: #454545;
}

.timeline-foot {
    display: flex;
    height: 21px;
    border-top: 1px solid #363636;
}

.foot-left,
.foot-zoom {
    display: flex;
    align-items: center;
    background: #535353;
    border-top: 1px solid #626262;
}

.foot-left {
    width: 260px;
    padding-left: 6px;
    gap: 12px;
    border-right: 2px solid #404040;
}

.foot-zoom {
    width: 158px;
    padding: 0 6px 0 8px;
    justify-content: space-between;
}

.foot-zoom input {
    appearance: none;
    width: 88px;
    height: 6px;
    border: 1px solid #2c2c2c;
    border-radius: 3px;
    background: #444;
}

.foot-zoom input::-webkit-slider-thumb {
    appearance: none;
    width: 0;
}

.hbar {
    flex: 1;
    background: #404040;
}

.corner {
    width: 16px;
    background: #535353;
}

/* 折叠面板列 */
.dock {
    width: 37px;
    flex: none;
    margin: 0 3px;
    display: flex;
    flex-direction: column;
}

.dock-group {
    height: 41px;
    margin-bottom: 2px;
    background: #535353;
    border-top: 1px solid #626262;
    color: #d0d0d0;
}

.dock-group.last {
    height: 69px;
}

.dock-group button {
    width: 37px;
    height: 29px;
}

.dock-group svg {
    width: 16px;
    height: 18px;
}

.dock-group .char {
    gap: 2px;
    font-size: 17px;
    font-weight: 600;
    line-height: 28px;
}

.char i {
    width: 1px;
    height: 16px;
    background: currentColor;
}

.dock-rest {
    flex: 1;
    background: #535353;
}

/* 右侧面板 */
.panels {
    width: 240px;
    flex: none;
    margin-right: 1px;
    display: flex;
    flex-direction: column;
}

.panel {
    background: #535353;
    margin-bottom: 3px;
    color: #b0b0b0;
}

.color-body {
    display: flex;
    padding: 11px 24px 0 6px;
    gap: 9px;
}

.channels {
    flex: 1;
    min-width: 0;
}

.channel {
    display: flex;
    align-items: flex-start;
    height: 26px;
}

.channel label {
    width: 16px;
}

.channel input[type="range"] {
    appearance: none;
    flex: 1;
    height: 18px;
    margin-top: -4px;
}

.channel input::-webkit-slider-runnable-track {
    height: 6px;
    border: 1px solid #8c8c8c;
    background: linear-gradient(90deg, #000, var(--tone));
}

.channel input::-webkit-slider-thumb {
    appearance: none;
    width: 10px;
    height: 9px;
    margin: 5px 0 0 -5px;
    background: #b4b4b4;
    clip-path: polygon(50% 0, 100% 60%, 100% 100%, 0 100%, 0 60%);
}

.channel input[type="text"] {
    width: 39px;
    height: 20px;
    margin-left: 6px;
    padding-left: 3px;
    background: #454545;
    border: 1px solid #3a3a3a;
    color: #777;
}

.red {
    --tone: #f00;
}

.green {
    --tone: #0f0;
}

.blue {
    --tone: #00f;
}

.spectrum {
    display: flex;
    height: 16px;
    margin: 4px 18px 6px 5px;
}

.hues {
    flex: 1;
    background:
        linear-gradient(#fff, rgba(255, 255, 255, 0) 50%, rgba(0, 0, 0, 0) 60%, rgba(0, 0, 0, 0.7)),
        linear-gradient(90deg, #f00, #ff0 17%, #00a04a 32%, #00a8f0 50%, #1c1c90 66%, #f0008c 84%, #f00);
}

.ends {
    width: 8px;
    background: linear-gradient(#fff 50%, #000 50%);
}

.adjust-body {
    padding: 6px 30px 2px 0;
}

.adjust-body p {
    padding-left: 9px;
    margin-bottom: 8px;
}

.adjust-body .icon-row {
    justify-content: center;
    height: 28px;
    color: #a8a8a8;
}

.panel.layers {
    flex: 1;
    min-height: 0;
    display: flex;
    flex-direction: column;
    margin-bottom: 1px;
}

.layer-row {
    display: flex;
    align-items: center;
    height: 29px;
    padding: 0 5px;
    border-top: 1px solid #666;
    border-bottom: 1px solid #444;
}

.filter-pick {
    width: 70px;
    margin-right: 16px;
}

.filter-pick select {
    padding-left: 21px;
}

.pick > .search {
    justify-self: start;
    margin-left: 6px;
}

.layer-row > .toggle {
    width: 9px;
    height: 18px;
    margin-left: auto;
    background: linear-gradient(#777 45%, #3e3e3e 45%);
    border: 1px solid #3e3e3e;
}

.blend-pick {
    width: 110px;
}

.layer-row label {
    margin-left: auto;
}

.locks button {
    width: 22px;
}

.locks svg {
    width: 15px;
    height: 15px;
}

.spin {
    display: flex;
    width: 55px;
    height: 21px;
    border: 1px solid #404040;
    border-radius: 2px;
}

.spin input {
    flex: 1;
    background: #4a4a4a;
}

.spin button {
    width: 18px;
    background: #626262;
}

.layer-list {
    flex: 1;
    display: flex;
    justify-content: flex-end;
    background: #454545;
}

.layer-foot {
    display: flex;
    justify-content: flex-end;
    height: 20px;
    padding-right: 21px;
    border-top: 1px solid #626262;
    color: #a0a0a0;
}

.layer-foot button {
    width: 27px;
}

.layer-foot svg {
    width: 14px;
    height: 14px;
}

.layer-foot .fx {
    font-style: italic;
    font-size: 13px;
}

/* 对话框 */
.dialog {
    position: absolute;
    top: 241px;
    left: 0;
    right: 0;
    margin: 0 auto;
    width: 500px;
    background: #ececec;
    border: 1px solid #fff;
    color: #111;
    box-shadow: 0 2px 10px rgba(0, 0, 0, 0.6);
}

.dialog-title {
    display: flex;
    justify-content: space-between;
    align-items: center;
    height: 25px;
    padding: 0 9px 3px 2px;
    background: #fff;
}

.dialog-body {
    display: flex;
    gap: 16px;
    padding: 10px 11px 13px 10px;
}

.dialog-main {
    flex: 1;
    min-width: 0;
}

.name-row {
    display: flex;
    justify-content: flex-end;
    align-items: center;
    gap: 4px;
}

.dialog input {
    height: 22px;
    padding: 0 4px;
    background: #fff;
    border: 1px solid #7a7a7a;
}

.name-row input {
    width: 224px;
}

.dialog input::selection {
    background: #0078d7;
    color: #fff;
}

.pick.light {
    height: 24px;
    background: #fff;
    border: 1px solid #7a7a7a;
    color: #111;
}

.pick.light select {
    padding-left: 5px;
}

.pick.light > svg {
    color: #555;
}

.pick.light.off {
    background: linear-gradient(90deg, #ececec calc(100% - 18px), #fff 0);
    border-color: #ccc;
}

.pick.light.off > svg {
    color: #bbb;
}

.dialog .off {
    color: #a0a0a0;
}

.dialog fieldset {
    min-width: 0;
    border: 1px solid #a8a8a8;
    margin: 4px 3px 0 0;
    padding: 0 8px 21px 13px;
}

.dialog legend {
    display: flex;
    align-items: center;
    justify-content: flex-end;
    gap: 4px;
    width: 327px;
    padding-right: 6px;
}

.dialog legend .pick {
    width: 250px;
}

.fields {
    display: grid;
    grid-template-columns: 1fr 98px 96px;
    grid-auto-rows: 24px;
    align-items: center;
    gap: 7px 4px;
    margin: 8px 14px 0 0;
}

.fields label {
    text-align: right;
}

.fields input {
    width: 98px;
}

.fields .span2 {
    grid-column: span 2;
}

.fields .mode {
    width: 94px;
}

.advanced {
    display: flex;
    align-items: center;
    gap: 5px;
    margin: 21px 24px 0 7px;
}

.advanced button {
    width: 16px;
    height: 16px;
    border-radius: 50%;
    background: #fff;
    box-shadow: 0 0 2px #555;
}

.advanced i {
    flex: 1;
    height: 1px;
    background: #a8a8a8;
}

.dialog-side {
    width: 107px;
    flex: none;
    display: flex;
    flex-direction: column;
    padding-top: 1px;
    text-align: center;
}

.dialog-side button {
    display: block;
    height: 20px;
    line-height: 19px;
    margin-bottom: 9px;
    background: #e1e1e1;
    border: 1px solid #adadad;
}

.dialog-side .primary {
    border: 2px solid #0078d7;
    line-height: 17px;
}

.dialog-side .hover {
    background: #e5f1fb;
    border-color: #0078d7;
}

.dialog-side button:disabled {
    background: #ccc;
    border-color: #bfbfbf;
    color: #8c8c8c;
}

.size-label {
    margin: 113px 0 8px;
}

/* 输入法 */
.ime {
    position: absolute;
    top: 3px;
    right: 160px;
    display: flex;
    align-items: center;
    height: 25px;
    padding: 0 1px 0 0;
    background: linear-gradient(90deg, transparent 12px, #fff 12px);
    color: #1c70c4;
}

.ime-logo {
    margin-right: 3px;
}

.ime button {
    width: 22px;
    font-size: 16px;
    font-weight: 700;
}

.ime button svg {
    width: 16px;
    height: 16px;
}

.ime .pale {
    color: #b8c4d6;
}

/* 水印 */
.watermark {
    position: absolute;
    right: 104px;
    bottom: 41px;
    color: #fff;
    opacity: 0.75;
    pointer-events: none;
}

.mark-top {
    display: flex;
    align-items: flex-end;
    height: 110px;
}

.mark-bai {
    font-family: Roboto, sans-serif;
    font-size: 80px;
    font-weight: 700;
    line-height: 60px;
}

.mark-du {
    font-family: Roboto, sans-serif;
    font-size: 54px;
    font-weight: 700;
    fill: #4a4a4a;
}

.mark-cn {
    margin-left: 4px;
    font-family: "Noto Sans CJK SC", sans-serif;
    font-size: 58px;
    font-weight: 900;
    line-height: 70px;
}

.mark-url {
    font-size: 39px;
    font-weight: 500;
    line-height: 52px;
}
```
